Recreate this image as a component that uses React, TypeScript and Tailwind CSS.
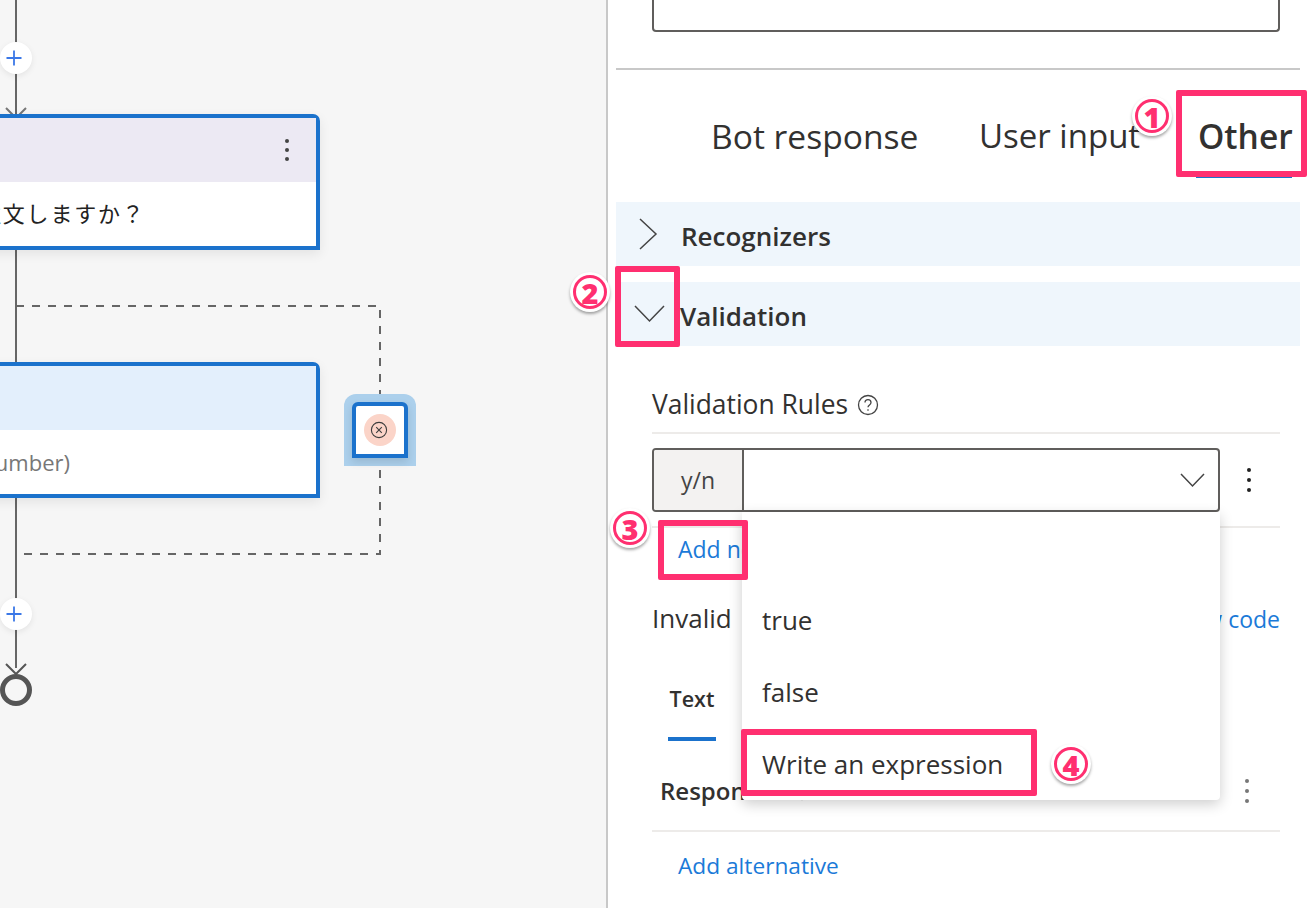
import React from "react";

const font = { fontFamily: '"Open Sans","Noto Sans","Noto Sans CJK JP",sans-serif' };

function Badge({ n, className }: { n: string; className: string }) {
  return (
    <div className={`absolute z-30 w-[40px] h-[40px] rounded-full bg-white flex items-center justify-center shadow-[0_2px_3px_rgba(0,0,0,0.35)] ${className}`}>
      <div className="w-[34px] h-[34px] rounded-full border-[3px] border-[#ff2f70] flex items-center justify-center text-[#ff2f70] text-[29px] font-extrabold leading-none">{n}</div>
    </div>
  );
}

function Plus({ className }: { className: string }) {
  return (
    <div className={`absolute w-[32px] h-[32px] rounded-full bg-white shadow-[0_2px_6px_rgba(0,0,0,0.08)] flex items-center justify-center ${className}`}>
      <svg width="16" height="16" viewBox="0 0 16 16" className="-ml-[4px]"><path d="M8 0.5v15M0.5 8h15" stroke="#3b78e7" strokeWidth="1.8" /></svg>
    </div>
  );
}

function Card({ top, header, children }: { top: string; header: string; children: React.ReactNode }) {
  return (
    <div className={`absolute left-[-200px] w-[520px] h-[136px] border-4 border-[#1b72cc] rounded-tr-[7px] bg-white shadow-[0_4px_12px_rgba(0,0,0,0.08)] flex flex-col ${top}`}>
      <div className={`h-[64px] ${header}`} />
      <div className="flex-1 flex items-center">{children}</div>
    </div>
  );
}

function Canvas() {
  return (
    <div className="relative w-[606px] h-[908px] shrink-0 bg-[#f6f6f6] overflow-hidden">
      <svg className="absolute left-0 top-0" width="606" height="908" fill="none">
        <path d="M16 0V115M16 250V362M16 497V668" stroke="#666" strokeWidth="2" />
        <path d="M6 108L16 118L26 108" stroke="#777" strokeWidth="2" />
        <path d="M6 664L16 674L26 664" stroke="#555" strokeWidth="2" />
        <path d="M16 306H380V554H16" stroke="#666" strokeWidth="2" strokeDasharray="8 8" />
      </svg>
      <Plus className="left-0 top-[42px]" />
      <Plus className="left-0 top-[598px]" />
      <Card top="top-[114px]" header="bg-[#ece9f3]">
        <div className="ml-[175px] text-[22px] tracking-[1.8px] text-[#222] whitespace-nowrap -mt-[2px]">注文しますか？</div>
        <div className="absolute right-[27px] top-[21px] flex flex-col gap-[5px]">
          <span className="w-[4px] h-[4px] rounded-full bg-[#444]" />
          <span className="w-[4px] h-[4px] rounded-full bg-[#444]" />
          <span className="w-[4px] h-[4px] rounded-full bg-[#444]" />
        </div>
      </Card>
      <Card top="top-[362px]" header="bg-[#e3effc]">
        <div className="absolute right-[246px] text-[22px] text-[#777] whitespace-nowrap">(Number)</div>
      </Card>
      <div className="absolute left-[344px] top-[394px] w-[72px] h-[72px] rounded-t-[12px] bg-[#acd0ec] p-[8px]">
        <div className="w-[56px] h-[56px] border-4 border-[#1b72cc] rounded-t-[6px] bg-white flex items-center justify-center shadow-[0_4px_8px_rgba(0,0,0,0.12)]">
          <div className="w-[32px] h-[32px] rounded-full bg-[#fbd4c8] flex items-center justify-center">
            <svg width="18" height="18" viewBox="0 0 18 18" fill="none" className="-ml-[2px]" stroke="#3d3d3d" strokeWidth="1.1"><circle cx="9" cy="9" r="7.6" /><path d="M6.2 6.2l5.6 5.6M11.8 6.2l-5.6 5.6" /></svg>
          </div>
        </div>
      </div>
      <div className="absolute left-0 top-[674px] w-[32px] h-[32px] rounded-full border-[5px] border-[#555]" />
    </div>
  );
}

function Chevron({ d, w, h }: { d: string; w: number; h: number }) {
  return <svg width={w} height={h} viewBox={`0 0 ${w} ${h}`} fill="none"><path d={d} stroke="#444" strokeWidth="1.5" /></svg>;
}

function Kebab({ color }: { color: string }) {
  return (
    <div className="flex flex-col gap-[6px]">
      <span className={`w-[4px] h-[4px] rounded-full ${color}`} />
      <span className={`w-[4px] h-[4px] rounded-full ${color}`} />
      <span className={`w-[4px] h-[4px] rounded-full ${color}`} />
    </div>
  );
}

function Panel() {
  return (
    <div className="relative flex-1 h-[908px] bg-white border-l-2 border-[#c8c8c8] px-[8px] text-[#323130]">
      <div className="ml-[36px] mr-[20px] h-[32px] border-2 border-t-0 border-[#605e5c] rounded-b-[4px]" />
      <div className="mt-[36px] h-[2px] bg-[#c8c8c8]" />
      <div className="h-[132px] flex items-start pl-[95px] pt-[44px] text-[33px] leading-[44px] whitespace-nowrap">
        <span className="w-[206px] text-[33.6px]">Bot response</span>
        <span className="ml-[62px] w-[162px]">User input</span>
        <span className="ml-[57px] text-[33.5px] font-semibold">Other</span>
      </div>
      <div className="h-[64px] bg-[#eff6fc] flex items-center text-[26px] font-semibold pt-[5px]">
        <span className="ml-[22px] w-[43px] flex -mt-[5px]"><Chevron d="M2 2L18 17L2 32" w={20} h={34} /></span>
        Recognizers
      </div>
      <div className="mt-[16px] h-[64px] bg-[#eff6fc] flex items-center text-[26px] font-semibold pt-[5px]">
        <span className="ml-[18px] w-[46px] flex -mt-[6px]"><Chevron d="M1 2L15.5 17L30 2" w={31} h={19} /></span>
        Validation
      </div>
      <div className="mx-[36px] mr-[20px]">
        <div className="h-[88px] border-b-2 border-[#edebe9] flex items-center pt-[31px] text-[26.4px] leading-none whitespace-nowrap">
          Validation Rules
          <svg className="ml-[9px]" width="22" height="22" viewBox="0 0 22 22" fill="none" stroke="#444" strokeWidth="1.3"><circle cx="11" cy="11" r="9.5" /><path d="M8 8.6c0-4 6-4 6 0 0 2.4-3 2.2-3 4.6" /><path d="M11 15.2v1.6" /></svg>
        </div>
        <div className="mt-[14px] flex items-center">
          <div className="w-[568px] h-[64px] border-2 border-[#605e5c] rounded-[4px] flex items-center overflow-hidden">
            <div className="w-[90px] h-full bg-[#f3f2f1] border-r-2 border-[#605e5c] flex items-center justify-center text-[23px] text-[#444]">y/n</div>
            <div className="flex-1" />
            <span className="mr-[13px] flex"><Chevron d="M1 1L12.5 13L24 1" w={25} h={15} /></span>
          </div>
          <span className="ml-[27px]"><Kebab color="bg-[#222]" /></span>
        </div>
        <div className="mt-[14px] h-[2px] bg-[#edebe9]" />
        <div className="mt-[3px] pl-[26px] h-[36px] text-[23px] leading-[36px] text-[#1b7ad8]">Add new</div>
        <div className="mt-[33px] flex justify-between h-[36px] items-center text-[26px] leading-none">
          <span>Invalid</span>
          <span className="text-[23px] text-[#1b7ad8] mt-[2px]">View code</span>
        </div>
        <div className="mt-[47px] ml-[16px] w-[48px] flex flex-col items-center">
          <span className="text-[21.5px] font-semibold leading-[32px]">Text</span>
          <span className="mt-[22px] h-[4px] w-full bg-[#1b72cc]" />
        </div>
        <div className="mt-[30px] pl-[8px] h-[40px] flex items-center justify-between text-[24px] font-semibold">
          <span className="flex items-center">Responses<svg className="ml-[8px] -mt-[2px]" width="22" height="22" viewBox="0 0 22 22" fill="none" stroke="#888" strokeWidth="1.3"><circle cx="11" cy="11" r="9.5" /></svg></span>
          <span className="mr-[31px]"><Kebab color="bg-[#777]" /></span>
        </div>
        <div className="mt-[19px] h-[2px] bg-[#edebe9]" />
        <div className="mt-[16px] pl-[26px] text-[22.7px] leading-[36px] text-[#1b7ad8]">Add alternative</div>
      </div>

      <div className="absolute left-[134px] top-[512px] w-[478px] h-[288px] bg-white rounded-b-[4px] shadow-[0_4px_14px_rgba(0,0,0,0.2)] z-10 pt-[72px] text-[26px] leading-[72px]">
        <div className="pl-[20px]">true</div>
        <div className="pl-[20px]">false</div>
        <div className="pl-[20px]">Write an expression</div>
      </div>

      <div className="absolute left-[588px] top-[177px] w-[96px] h-[1px] bg-[#1b72cc]" />
      <div className="absolute z-20 left-[568px] top-[90px] w-[131px] h-[87px] border-[6px] border-[#ff2f70] rounded-[2px]" />
      <div className="absolute z-20 left-[7px] top-[266px] w-[65px] h-[81px] border-[6px] border-[#ff2f70] rounded-[2px]" />
      <div className="absolute z-20 left-[50px] top-[520px] w-[90px] h-[60px] border-[6px] border-[#ff2f70] rounded-[2px]" />
      <div className="absolute z-20 left-[133px] top-[729px] w-[296px] h-[67px] border-[6px] border-[#ff2f70] rounded-[2px]" />
      <Badge n="1" className="left-[524px] top-[96px]" />
      <Badge n="2" className="left-[-38px] top-[272px]" />
      <Badge n="3" className="left-[2px] top-[508px]" />
      <Badge n="4" className="left-[443px] top-[744px]" />
    </div>
  );
}

export default function App() {
  return (
    <div className="relative w-[1308px] h-[908px] flex overflow-hidden bg-white" style={font}>
      <Canvas />
      <Panel />
    </div>
  );
}
